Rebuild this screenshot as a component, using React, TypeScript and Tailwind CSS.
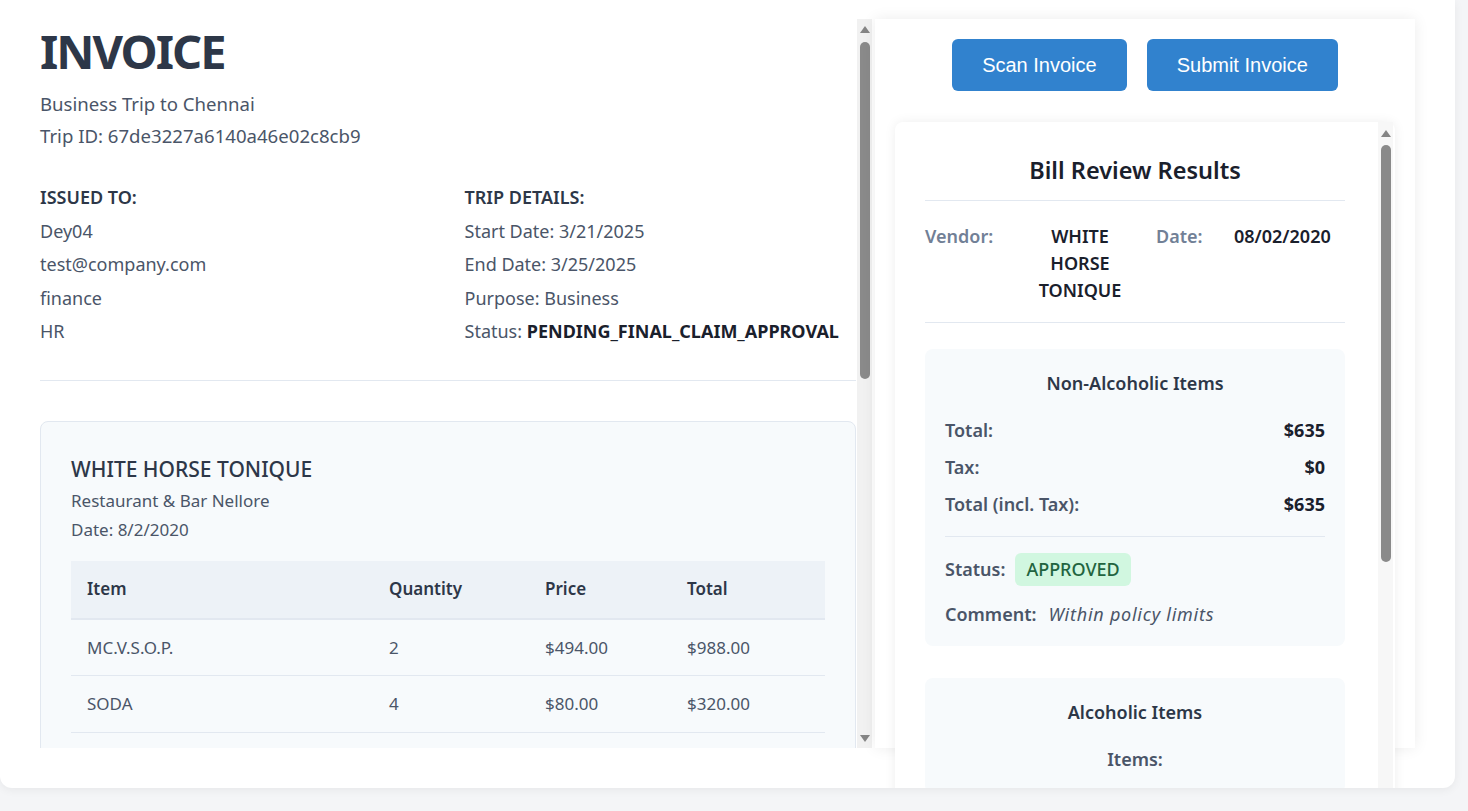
import { FC, ReactElement } from "react";

type TItem = { name: string; qty: number; price: string; total: string };

const items: TItem[] = [
  { name: "MC.V.S.O.P.", qty: 2, price: "$494.00", total: "$988.00" },
  { name: "SODA", qty: 4, price: "$80.00", total: "$320.00" },
];

const Arrow: FC<{ down?: boolean }> = ({ down }): ReactElement => (
  <svg width="10" height="7" viewBox="0 0 10 7" className="shrink-0">
    {down ? (
      <polygon points="0,0 10,0 5,7" fill="#858585" />
    ) : (
      <polygon points="5,0 10,7 0,7" fill="#858585" />
    )}
  </svg>
);

const Row: FC<{ label: string; value: string }> = ({ label, value }) => (
  <div className="flex items-center justify-between leading-[27px]">
    <span className="font-semibold text-[#4a5568]">{label}</span>
    <span className="font-bold text-[#1a202c]">{value}</span>
  </div>
);

export default function App(): ReactElement {
  return (
    <main className="h-[811px] w-full overflow-hidden bg-[#f4f5f7] font-['Noto_Sans',sans-serif]">
      <div className="flex h-[788px] w-[1455px] items-start overflow-hidden rounded-b-xl bg-white pt-[19px] shadow-[0_2px_10px_rgba(0,0,0,0.06)]">
        {/* Left: invoice */}
        <div className="flex h-[729px] shrink-0">
          <div className="h-full w-[857px] overflow-hidden pl-10 pt-2">
            <h1 className="text-[47px] font-bold leading-[48px] tracking-[-2px] text-[#2d3748]">
              INVOICE
            </h1>
            <div className="mt-[13px] text-[18.6px] leading-[32px] text-[#4a5568]">
              <p>Business Trip to Chennai</p>
              <p>Trip ID: 67de3227a6140a46e02c8cb9</p>
            </div>

            <div className="mt-[29px] grid grid-cols-2 gap-8 text-[18px] leading-[33.5px] text-[#4a5568]">
              <div className="flex flex-col">
                <h3 className="text-[18px] font-semibold text-[#2d3748]">
                  ISSUED TO:
                </h3>
                <p>Dey04</p>
                <p>test@company.com</p>
                <p>finance</p>
                <p>HR</p>
              </div>
              <div className="flex flex-col">
                <h3 className="text-[18px] font-semibold text-[#2d3748]">
                  TRIP DETAILS:
                </h3>
                <p>Start Date: 3/21/2025</p>
                <p>End Date: 3/25/2025</p>
                <p>Purpose: Business</p>
                <p className="whitespace-nowrap">
                  Status:{" "}
                  <span className="font-bold text-[#1a202c]">
                    PENDING_FINAL_CLAIM_APPROVAL
                  </span>
                </p>
              </div>
            </div>

            <div className="mt-[31px] h-px w-[816px] bg-[#e2e8f0]" />

            <div className="mt-10 w-[816px] rounded-lg border border-[#e2e8f0] bg-[#f7fafc] px-[30px] pt-8 pb-8">
              <h2 className="text-[21px] font-medium leading-[30px] text-[#2d3748]">
                WHITE HORSE TONIQUE
              </h2>
              <p className="mt-[2px] text-[17px] leading-[29px] text-[#4a5568]">
                Restaurant &amp; Bar Nellore
              </p>
              <p className="text-[17px] leading-[29px] text-[#4a5568]">
                Date: 8/2/2020
              </p>
              <table className="mt-[17px] w-full border-collapse text-left text-[17px]">
                <thead>
                  <tr className="h-[58px] border-b-2 border-[#e2e8f0] bg-[#edf2f7] text-[#2d3748]">
                    <th className="w-[302px] pl-4 font-semibold">Item</th>
                    <th className="w-[156px] pl-4 font-semibold">Quantity</th>
                    <th className="w-[142px] pl-4 font-semibold">Price</th>
                    <th className="pl-4 font-semibold">Total</th>
                  </tr>
                </thead>
                <tbody className="text-[#4a5568]">
                  {items.map((item, index) => (
                    <tr key={index} className="h-[57px] border-b border-[#e2e8f0]">
                      <td className="pl-4">{item.name}</td>
                      <td className="pl-4">{item.qty}</td>
                      <td className="pl-4">{item.price}</td>
                      <td className="pl-4">{item.total}</td>
                    </tr>
                  ))}
                </tbody>
              </table>
            </div>
          </div>

          {/* scrollbar */}
          <div className="flex h-full w-[15px] flex-col items-center bg-[#f1f1f1] pt-[7px] pb-[6px]">
            <Arrow />
            <div className="mt-[9px] h-[337px] w-[10px] rounded-full bg-[#8a8a8a]" />
            <div className="flex-1" />
            <Arrow down />
          </div>
        </div>

        {/* Right: review panel */}
        <div className="ml-[3px] flex h-[729px] w-[540px] shrink-0 flex-col bg-white px-5 pt-5 shadow-[0_0_14px_rgba(0,0,0,0.08)]">
          <div className="flex justify-center gap-5 font-['Liberation_Sans',sans-serif] text-[20px] text-white">
            <button className="h-[52px] rounded-md bg-[#3182ce] px-[30px]">
              Scan Invoice
            </button>
            <button className="h-[52px] rounded-md bg-[#3182ce] px-[30px]">
              Submit Invoice
            </button>
          </div>

          <div className="mt-[31px] flex h-[700px] w-[500px] shrink-0 rounded-lg bg-white shadow-[0_0_12px_rgba(0,0,0,0.07)]">
            <div className="w-[483px] overflow-hidden pl-[30px] pr-[33px] pt-8 text-[18px]">
              <h2 className="text-center text-[23.5px] font-semibold leading-[32px] text-[#1a202c]">
                Bill Review Results
              </h2>
              <div className="mt-[14px] h-px bg-[#e2e8f0]" />

              <div className="mt-[22px] flex items-start leading-[27px]">
                <span className="w-[105px] font-semibold text-[#718096]">Vendor:</span>
                <span className="w-[100px] text-center font-semibold text-[#1a202c]">
                  WHITE HORSE TONIQUE
                </span>
                <span className="ml-[26px] w-[78px] font-semibold text-[#718096]">Date:</span>
                <span className="font-semibold text-[#1a202c]">08/02/2020</span>
              </div>
              <div className="mt-[18px] h-px bg-[#e2e8f0]" />

              <section className="mt-[26px] rounded-lg bg-[#f7fafc] px-5 pt-[21px] pb-[18px]">
                <h3 className="text-center font-semibold leading-[27px] text-[#2d3748]">
                  Non-Alcoholic Items
                </h3>
                <div className="mt-5 flex flex-col gap-[10px]">
                  <Row label="Total:" value="$635" />
                  <Row label="Tax:" value="$0" />
                  <Row label="Total (incl. Tax):" value="$635" />
                </div>
                <div className="mt-[18px] h-px bg-[#e2e8f0]" />
                <div className="mt-4 flex items-center gap-[10px]">
                  <span className="font-semibold text-[#4a5568]">Status:</span>
                  <span className="flex h-[33px] items-center rounded-md bg-[#d1f7e0] px-[11px] font-medium text-[#22643f]">
                    APPROVED
                  </span>
                </div>
                <div className="mt-[15px] flex items-center gap-[12px] leading-[27px]">
                  <span className="font-semibold text-[#4a5568]">Comment:</span>
                  <span className="italic tracking-[0.75px] text-[#4a5568]">
                    Within policy limits
                  </span>
                </div>
              </section>

              <section className="mt-8 rounded-lg bg-[#f7fafc] px-5 pt-[21px] pb-5">
                <h3 className="text-center font-semibold leading-[27px] text-[#2d3748]">
                  Alcoholic Items
                </h3>
                <p className="mt-5 text-center font-semibold leading-[27px] text-[#4a5568]">
                  Items:
                </p>
              </section>
            </div>

            {/* inner scrollbar */}
            <div className="flex w-[15px] flex-col items-center bg-[#f7f7f7] pt-2">
              <Arrow />
              <div className="mt-2 h-[417px] w-[10px] rounded-full bg-[#8a8a8a]" />
            </div>
          </div>
        </div>
      </div>
    </main>
  );
}
